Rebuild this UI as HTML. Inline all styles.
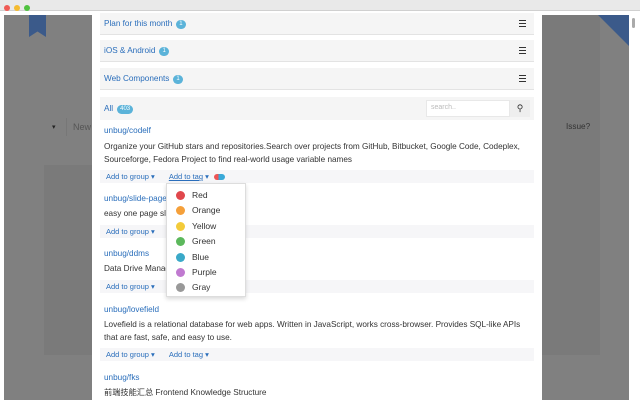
<!DOCTYPE html>
<html><head><meta charset="utf-8"><style>
*{margin:0;padding:0;box-sizing:border-box}
body{width:640px;height:400px;overflow:hidden;background:#fff;font-family:"Liberation Sans","Noto Sans CJK SC",sans-serif;font-size:8.2px;color:#333;position:relative}
.a{position:absolute}
.badge{display:inline-block;background:#5bb3d9;color:#fff;border-radius:6px;font-size:6px;padding:1px 3px;margin-left:4px;vertical-align:1px;line-height:7px}
.grp{left:100px;width:434px;height:22px;background:#f5f5f5;border-bottom:1px solid #e3e3e3;padding:6px 4px;color:#2a6ebb}
.ham{position:absolute;right:8px;top:7px;width:7px;height:7px;border-top:1.5px solid #333;border-bottom:1.5px solid #333}
.ham:after{content:"";position:absolute;left:0;right:0;top:1.5px;border-top:1.5px solid #333}
.act{left:100px;width:434px;height:13px;background:#f6f6f8;color:#2a6ebb;font-size:7.5px;padding:2px 6px}
.act .g{margin-right:14px}
.t{left:104px;color:#2a6ebb}
.d{left:104px;line-height:13px}
.dot{display:inline-block;width:9px;height:9px;border-radius:50%;vertical-align:-2px;margin-right:7px}
</style></head><body>
<div class="a" style="left:0;top:0;width:640px;height:11px;background:#e9e9e9;border-bottom:1px solid #d0d0d0"></div>
<div class="a" style="left:4px;top:5px;width:6px;height:6px;border-radius:50%;background:#f05b55"></div>
<div class="a" style="left:14px;top:5px;width:6px;height:6px;border-radius:50%;background:#f5bb2f"></div>
<div class="a" style="left:24px;top:5px;width:6px;height:6px;border-radius:50%;background:#4fc23f"></div>
<div class="a" style="left:4px;top:15px;width:88px;height:385px;background:#808080"></div>
<div class="a" style="left:44px;top:165px;width:48px;height:190px;background:#7a7a7a"></div>
<div class="a" style="left:29px;top:15px;width:17px;height:22px;background:#3b5a8a;clip-path:polygon(0 0,100% 0,100% 100%,50% 75%,0 100%)"></div>
<div class="a" style="left:52px;top:123px;font-size:7px;color:#222">▾</div>
<div class="a" style="left:66px;top:118px;width:26px;height:18px;border-left:1px solid #777;color:#555;padding:4px 6px;font-size:9px">New</div>
<div class="a" style="left:542px;top:15px;width:88px;height:385px;background:#808080"></div>
<div class="a" style="left:542px;top:15px;width:58px;height:340px;background:#7a7a7a"></div>
<div class="a" style="left:598px;top:15px;width:32px;height:32px;background:#3b5a8a;clip-path:polygon(0 0,100% 0,100% 100%)"></div>
<div class="a" style="left:566px;top:122px;color:#333">Issue?</div>
<div class="a" style="left:629px;top:15px;width:11px;height:385px;background:#fff"></div>
<div class="a" style="left:632px;top:18px;width:3px;height:10px;background:#aaa;border-radius:2px"></div>
<div class="a" style="left:92px;top:12px;width:450px;height:388px;background:#fff"></div>
<div class="a grp" style="top:13px">Plan for this month<span class="badge">1</span><div class="ham"></div></div>
<div class="a grp" style="top:40px">iOS &amp; Android<span class="badge">1</span><div class="ham"></div></div>
<div class="a grp" style="top:68px">Web Components<span class="badge">1</span><div class="ham"></div></div>
<div class="a" style="left:100px;top:97px;width:434px;height:23px;background:#f5f5f5;padding:7px 4px;color:#2a6ebb">All<span class="badge">403</span></div>
<div class="a" style="left:426px;top:100px;width:84px;height:17px;background:#fff;border:1px solid #e8e8e8;font-size:7px;color:#bbb;padding:3px 4px">search..</div>
<div class="a" style="left:510px;top:100px;width:20px;height:17px;background:#eee;font-size:9px;text-align:center;line-height:17px">⚲</div>
<div class="a t" style="top:126px">unbug/codelf</div>
<div class="a d" style="top:140px">Organize your GitHub stars and repositories.Search over projects from GitHub, Bitbucket, Google Code, Codeplex,<br>Sourceforge, Fedora Project to find real-world usage variable names</div>
<div class="a act" style="top:170px"><span class="g">Add to group ▾</span><span style="text-decoration:underline">Add to tag</span> ▾ <span style="display:inline-block;width:11px;height:6px;border-radius:3px;background:linear-gradient(90deg,#e55 40%,#3aa9d8 40%);vertical-align:-1px;margin-left:3px"></span></div>
<div class="a t" style="top:194px">unbug/slide-page</div>
<div class="a d" style="top:207px">easy one page slide</div>
<div class="a act" style="top:225px"><span class="g">Add to group ▾</span></div>
<div class="a t" style="top:249px">unbug/ddms</div>
<div class="a d" style="top:262px">Data Drive Manager</div>
<div class="a act" style="top:280px"><span class="g">Add to group ▾</span></div>
<div class="a t" style="top:305px">unbug/lovefield</div>
<div class="a d" style="top:318px">Lovefield is a relational database for web apps. Written in JavaScript, works cross-browser. Provides SQL-like APIs<br>that are fast, safe, and easy to use.</div>
<div class="a act" style="top:348px"><span class="g">Add to group ▾</span><span>Add to tag ▾</span></div>
<div class="a t" style="top:373px">unbug/fks</div>
<div class="a d" style="top:386px">前端技能汇总 Frontend Knowledge Structure</div>
<div class="a" style="left:166px;top:183px;width:80px;height:114px;background:#fff;border:1px solid #ddd;box-shadow:0 2px 4px rgba(0,0,0,.15);padding:4px 9px;line-height:15.4px;font-size:8.5px">
<div><span class="dot" style="background:#e0474c"></span>Red</div>
<div><span class="dot" style="background:#f5a03a"></span>Orange</div>
<div><span class="dot" style="background:#f3cb3a"></span>Yellow</div>
<div><span class="dot" style="background:#5cb85c"></span>Green</div>
<div><span class="dot" style="background:#3aa9c8"></span>Blue</div>
<div><span class="dot" style="background:#c07ad0"></span>Purple</div>
<div><span class="dot" style="background:#999"></span>Gray</div>
</div>
</body></html>
